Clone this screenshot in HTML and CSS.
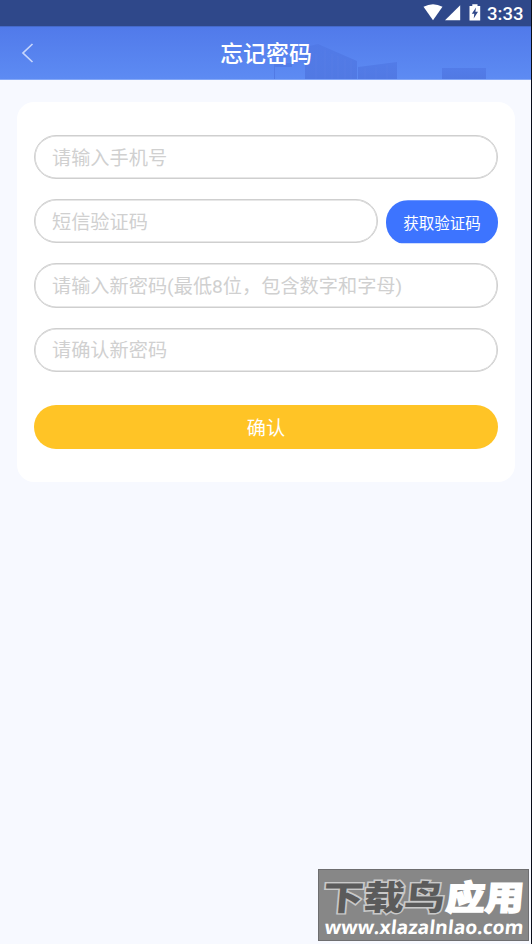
FILE: index.html
```
<!DOCTYPE html>
<html lang="zh-CN">

<head>
    <meta charset="UTF-8">
    <title>忘记密码</title>
    <link rel="stylesheet" href="styles.css">
</head>

<body>

<div class="status-bar">
    <svg class="status-icons" width="60" height="20" viewBox="0 0 60 20">
        <path fill="#fff" d="M0.5 3.8 Q10 -1.4 19.5 3.8 L10 17.2 Z"/>
        <path fill="#fff" d="M37.2 2.2 V17.2 H22 Z"/>
        <path fill="#fff" d="M46.5 3 H49.3 V1.2 H54.5 V3 H57.2 V17.5 H46.5 Z"/>
        <path fill="#2f488a" d="M53 4.5 L48.8 10.8 H51.3 L50.7 15.4 L55 8.7 H52.4 Z"/>
    </svg>
    <span class="clock">3:33</span>
</div>

<header class="header">
    <svg class="skyline" width="531" height="52" viewBox="0 0 531 52">
        <defs>
            <linearGradient id="tower" x1="0" y1="0" x2="0" y2="1">
                <stop offset="0" stop-color="#4f77e4" stop-opacity=".7"/>
                <stop offset="1" stop-color="#5179e3"/>
            </linearGradient>
        </defs>
        <g fill="url(#tower)">
            <path d="M274 36 H292 V40 H275 V53 H274 Z"/>
            <path d="M305 20 L318 17 L357 34 V53 H305 Z"/>
            <path d="M358 40 L397 35 V53 H358 Z"/>
            <path d="M442 41 H486 V53 H442 Z"/>
        </g>
        <path stroke="#638bee" stroke-opacity=".22" d="M316 27V53M325 23V53M332 27V53M338 29V53M345 32V53M351 33V53M365 41V53M376 40V53M387 38V53"/>
    </svg>
    <svg class="back" width="14" height="22" viewBox="0 0 14 22">
        <path fill="none" stroke="#c7d6fc" stroke-width="1.7" d="M11.5 2 L2 11 L11.5 20"/>
    </svg>
    <h1 class="title">忘记密码</h1>
</header>

<main class="card">
    <input class="field" type="text" placeholder="请输入手机号">
    <div class="code-row">
        <input class="field" type="text" placeholder="短信验证码">
        <button class="btn-code">获取验证码</button>
    </div>
    <input class="field" type="text" placeholder="请输入新密码(最低8位，包含数字和字母)">
    <input class="field" type="text" placeholder="请确认新密码">
    <button class="btn-submit">确认</button>
</main>

<svg class="watermark" width="211" height="72" viewBox="0 0 211 72">
    <rect x=".5" y=".5" width="210" height="71" fill="#878787" stroke="#6e6e70"/>
    <g class="mark-name" transform="translate(0 40.5) skewX(-5)">
        <text class="mark-dark" x="4" y="0" textLength="122" lengthAdjust="spacingAndGlyphs">下载鸟</text>
        <text class="mark-light" x="127" y="0" textLength="78" lengthAdjust="spacingAndGlyphs">应用</text>
    </g>
    <g transform="translate(0 65) skewX(-6)">
        <text class="mark-url" x="6" y="0" textLength="199" lengthAdjust="spacingAndGlyphs">www.xlazalnlao.com</text>
    </g>
</svg>

</body>
</html>
```
FILE: styles.css
```
* {
    box-sizing: border-box;
}

html, body {
    margin: 0;
    padding: 0;
    height: 100%;
    overflow: hidden;
}

body {
    background: #f7f9ff;
    border-right: 1px solid #090d18;
    font-family: Roboto, "Noto Sans CJK SC", sans-serif;
}

.status-bar {
    display: flex;
    align-items: center;
    justify-content: flex-end;
    height: 26px;
    padding-right: 8px;
    background: #2f488a;
    color: #fff;
}

.status-icons {
    margin: 0 4px 0 0;
}

.clock {
    width: 36px;
    padding-top: 2px;
    font-size: 18.5px;
    font-weight: 500;
    line-height: 24px;
    white-space: nowrap;
}

.header {
    position: relative;
    display: flex;
    align-items: center;
    height: 54px;
    padding: 0 20px 0 21px;
    background: linear-gradient(#517aea, #5d8bf3);
    border-top: 1px solid #456acb;
    border-bottom: 1px solid #84a8f7;
}

.skyline {
    position: absolute;
    left: 0;
    top: 0;
}

.back {
    position: relative;
}

.title {
    position: relative;
    flex: 1;
    margin: 0 14px 0 0;
    padding-top: 4px;
    color: #fff;
    font-size: 22.9px;
    font-weight: 500;
    line-height: 32px;
    text-align: center;
}

.card {
    display: flex;
    flex-direction: column;
    gap: 20px;
    height: 380px;
    margin: 22px 16px 0 17px;
    padding: 33px 17px 0;
    background: #fff;
    border-radius: 17px;
}

.field {
    flex: none;
    width: 100%;
    height: 44.2px;
    padding: 2px 16px 0 17px;
    background: #fff;
    border: 1px solid #cfcfcf;
    border-radius: 22px;
    box-shadow: inset 0 0 0 .6px #cfcfcf;
    outline: none;
    font-family: inherit;
    font-size: 19.2px;
}

.field::placeholder {
    color: #d0d0d0;
}

.code-row {
    display: flex;
    gap: 8px;
}

.code-row .field {
    flex: 1;
    min-width: 0;
}

.btn-code,
.btn-submit {
    padding: 0;
    border: 0;
    color: #fff;
    font-family: inherit;
}

.btn-code {
    width: 112px;
    height: 45px;
    margin: 1px 0 -2px;
    padding-bottom: 1px;
    background: #3d74ff;
    border-radius: 22px;
    clip-path: inset(0 0 2px);
    font-size: 15.5px;
}

.btn-submit {
    flex: none;
    height: 44px;
    margin-top: 13px;
    background: #ffc426;
    border-radius: 22px;
    font-size: 19.2px;
}

.watermark {
    position: absolute;
    right: 3px;
    bottom: 3px;
}

.mark-name {
    font-family: "Noto Sans CJK SC", sans-serif;
    font-size: 34px;
    font-weight: 900;
    paint-order: stroke;
}

.mark-dark {
    fill: #5b5b5b;
    stroke: #c9c9c9;
    stroke-width: 3px;
}

.mark-light {
    fill: #fff;
    stroke: #fff;
    stroke-width: 1.5px;
}

.mark-url {
    fill: #fff;
    font-family: "Open Sans", sans-serif;
    font-size: 19px;
    font-weight: 700;
}
```
